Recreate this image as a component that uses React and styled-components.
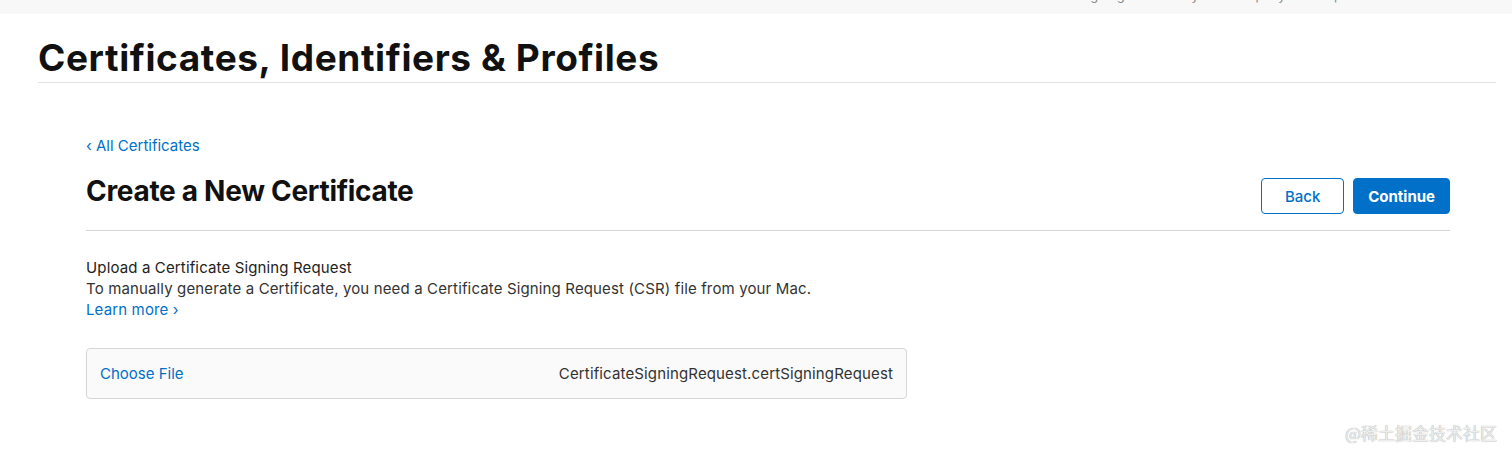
import React from "react";
import styled, { createGlobalStyle } from "styled-components";

const Global = createGlobalStyle`
  html, body { margin: 0; padding: 0; background: #fff; }
  body { font-family: Inter, "Liberation Sans", Arial, sans-serif; color: #333; }
  * { box-sizing: border-box; }
`;

const TopBar = styled.div`
  height: 14px;
  background: #f8f8f8;
  overflow: hidden;
  display: flex;
  justify-content: flex-end;
  padding-right: 170px;
`;

const TopText = styled.div`
  font-size: 13px;
  line-height: 13px;
  margin-top: -11px;
  color: #888;
  display: flex;
  gap: 28px;
  white-space: nowrap;
`;

const Header = styled.header`
  margin: 0 16px 0 38px;
  padding-top: 20px;
  border-bottom: 1px solid #e2e2e2;
`;

const SiteTitle = styled.h1`
  margin: 0;
  font-size: 37px;
  line-height: 48px;
  font-weight: 700;
  letter-spacing: 0.6px;
  color: #111;
`;

const Main = styled.main`
  margin: 0 62px 0 86px;
  padding-top: 52px;
`;

const BackLink = styled.a`
  font-size: 15px;
  line-height: 20px;
  color: #0070c9;
  text-decoration: none;
  display: inline-block;
`;

const TitleRow = styled.div`
  display: flex;
  align-items: flex-start;
  justify-content: space-between;
  padding-top: 17px;
  padding-bottom: 16px;
  border-bottom: 1px solid #d6d6d6;
`;

const PageTitle = styled.h2`
  margin: 0;
  font-size: 28px;
  line-height: 36px;
  font-weight: 700;
  color: #111;
  letter-spacing: -0.3px;
`;

const Buttons = styled.div`
  display: flex;
  gap: 9px;
  padding-top: 5px;
`;

const Button = styled.button`
  height: 36px;
  min-width: ${(p) => (p.$primary ? "96px" : "83px")};
  border-radius: 4px;
  font-family: inherit;
  font-size: 15px;
  font-weight: ${(p) => (p.$primary ? 700 : 500)};
  border: 1px solid #0070c9;
  background: ${(p) => (p.$primary ? "#0070c9" : "#fff")};
  color: ${(p) => (p.$primary ? "#fff" : "#0070c9")};
  padding: 0 14px;
`;

const Section = styled.section`
  padding-top: 26px;
  font-size: 15px;
  line-height: 21px;
  letter-spacing: 0.14px;
`;

const Label = styled.div`
  color: #222;
`;

const Desc = styled.div`
  color: #333;
`;

const Learn = styled.a`
  color: #0070c9;
  text-decoration: none;
`;

const FileBox = styled.div`
  margin-top: 28px;
  width: 821px;
  height: 51px;
  border: 1px solid #d6d6d6;
  border-radius: 4px;
  background: #fafafa;
  display: flex;
  align-items: center;
  justify-content: space-between;
  padding: 0 13px;
  font-size: 15px;
`;

const Choose = styled.span`
  color: #0070c9;
  letter-spacing: 0;
`;

const FileName = styled.span`
  color: #333;
`;

const Watermark = styled.div`
  position: absolute;
  right: 15px;
  top: 420px;
  font-family: "Noto Sans CJK SC", sans-serif;
  font-size: 17px;
  color: #eeeeee;
  text-shadow: 0 0 1px #888;
`;

export default function App() {
  return (
    <>
      <Global />
      <TopBar>
        <TopText>
          <span>Signing</span>
          <span>Identity</span>
          <span>Company</span>
          <span>Help</span>
        </TopText>
      </TopBar>
      <Header>
        <SiteTitle>Certificates, Identifiers &amp; Profiles</SiteTitle>
      </Header>
      <Main>
        <BackLink href="#">‹ All Certificates</BackLink>
        <TitleRow>
          <PageTitle>Create a New Certificate</PageTitle>
          <Buttons>
            <Button>Back</Button>
            <Button $primary>Continue</Button>
          </Buttons>
        </TitleRow>
        <Section>
          <Label>Upload a Certificate Signing Request</Label>
          <Desc>
            To manually generate a Certificate, you need a Certificate Signing Request (CSR) file from your Mac.
          </Desc>
          <Learn href="#">Learn more ›</Learn>
          <FileBox>
            <Choose>Choose File</Choose>
            <FileName>CertificateSigningRequest.certSigningRequest</FileName>
          </FileBox>
        </Section>
      </Main>
      <Watermark>@稀土掘金技术社区</Watermark>
    </>
  );
}
